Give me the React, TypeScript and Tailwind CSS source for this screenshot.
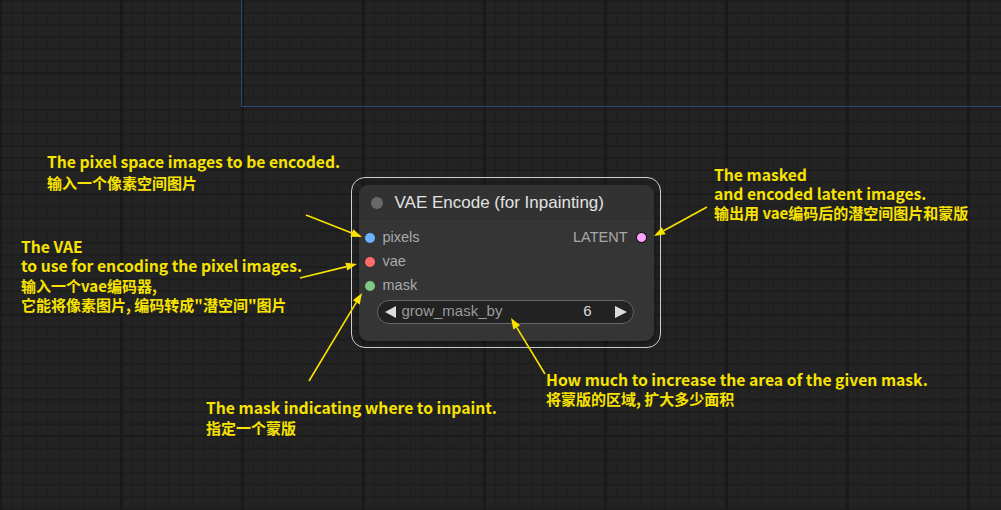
import React from "react";

const YELLOW = "#f8e300";

type Arrow = { x1: number; y1: number; x2: number; y2: number };

const arrows: Arrow[] = [
  { x1: 306, y1: 215, x2: 362, y2: 237 },
  { x1: 300, y1: 278, x2: 357, y2: 264 },
  { x1: 309, y1: 381, x2: 362, y2: 293 },
  { x1: 707, y1: 207, x2: 654, y2: 236 },
  { x1: 545, y1: 374, x2: 511, y2: 318 },
];

const ArrowLayer = () => (
  <svg className="absolute inset-0 pointer-events-none" width={1001} height={510}>
    {arrows.map((a, i) => {
      const dx = a.x2 - a.x1;
      const dy = a.y2 - a.y1;
      const len = Math.hypot(dx, dy);
      const ux = dx / len;
      const uy = dy / len;
      const bx = a.x2 - ux * 11;
      const by = a.y2 - uy * 11;
      const px = -uy * 4;
      const py = ux * 4;
      return (
        <g key={i}>
          <line x1={a.x1} y1={a.y1} x2={bx} y2={by} stroke={YELLOW} strokeWidth={1.6} />
          <polygon
            points={`${a.x2},${a.y2} ${bx + px},${by + py} ${bx - px},${by - py}`}
            fill={YELLOW}
          />
        </g>
      );
    })}
  </svg>
);

// lines: [text, isLatinOnly]
const Note = ({ className, lines }: { className: string; lines: [string, boolean][] }) => (
  <div
    className={`absolute whitespace-nowrap font-bold text-[15px] text-[#f8e300] font-['Noto_Sans_CJK_SC',sans-serif] ${className}`}
  >
    {lines.map(([l, latin], i) => (
      <div key={i} className={latin ? "text-[15.7px]" : ""}>
        {l}
      </div>
    ))}
  </div>
);

const Dot = ({ color, outlined }: { color: string; outlined?: boolean }) => (
  <span
    className={outlined ? "w-[11px] h-[11px] rounded-full border border-black" : "w-[10px] h-[10px] rounded-full"}
    style={{ backgroundColor: color }}
  />
);

const SlotRow = ({ color, label, output }: { color: string; label: string; output?: string }) => (
  <div className="flex items-center justify-between h-[24px] pl-[6px] pr-[7px] text-[14.5px] text-[#a9a9a9]">
    <div className="flex items-center gap-[8px]">
      <Dot color={color} />
      <span>{label}</span>
    </div>
    {output && (
      <div className="flex items-center gap-[8px]">
        <span>{output}</span>
        <Dot color="#ffa3ff" outlined />
      </div>
    )}
  </div>
);

const VaeEncodeNode = () => (
  <div className="absolute left-[351px] top-[177px] w-[310px] h-[171px] rounded-[14px] border-[1.5px] border-[#cfcfcf] p-[6.5px]">
    <div className="h-full rounded-[9px] bg-[#353535] shadow-[0_2px_6px_rgba(0,0,0,0.5)] overflow-hidden font-['Liberation_Sans',Arial,sans-serif]">
      <div className="flex items-center gap-[12px] h-[37px] bg-[#323232] border-b border-[#393939] pl-[12px]">
        <span className="w-[12px] h-[12px] rounded-full bg-[#696969]" />
        <span className="text-[17px] text-[#e2e2e2]">VAE Encode (for Inpainting)</span>
      </div>
      <div className="pt-[4px] flex flex-col">
        <SlotRow color="#6cb2ff" label="pixels" output="LATENT" />
        <SlotRow color="#ff6b6b" label="vae" />
        <SlotRow color="#80c685" label="mask" />
        <div className="mt-[2px] ml-[18px] mr-[20px] h-[24px] rounded-full bg-[#222222] border border-[#676767] flex items-center pl-[7px] pr-[6px] text-[15px]">
          <svg width="12" height="12" viewBox="0 0 12 12">
            <polygon points="0,6 11,0 11,12" fill="#dcdcdc" />
          </svg>
          <span className="ml-[5px] text-[#9a9a9a]">grow_mask_by</span>
          <span className="ml-auto text-[#dcdcdc]">6</span>
          <svg className="ml-[23px]" width="12" height="12" viewBox="0 0 12 12">
            <polygon points="12,6 0,0 0,12" fill="#dcdcdc" />
          </svg>
        </div>
      </div>
    </div>
  </div>
);

export default function App() {
  return (
    <div className="relative w-[1001px] h-[510px] overflow-hidden bg-[#232323] [background-image:linear-gradient(to_right,#1a1a1a_3px,transparent_3px),linear-gradient(to_bottom,#1b1b1b_2px,transparent_2px),linear-gradient(to_right,#1d1d1d_1px,transparent_1px),linear-gradient(to_bottom,#1d1d1d_1.5px,transparent_1.5px)] [background-size:121px_121px,121px_121px,12.1px_12.1px,12.1px_12.1px] [background-position:120px_0,0_72px,11px_0,0_12px]">
      <div className="absolute left-[241px] top-[-2px] w-[770px] h-[109px] border-l border-b border-[#2b4677]" />

      <Note
        className="left-[47px] top-[151px] leading-[21px]"
        lines={[
          ["The pixel space images to be encoded.", true],
          ["输入一个像素空间图片", false],
        ]}
      />
      <Note
        className="left-[21px] top-[237px] leading-[19.4px]"
        lines={[
          ["The VAE", true],
          ["to use for encoding the pixel images.", true],
          ["输入一个vae编码器,", false],
          ['它能将像素图片, 编码转成"潜空间"图片', false],
        ]}
      />
      <Note
        className="left-[714px] top-[165px] leading-[19px]"
        lines={[
          ["The masked", true],
          ["and encoded latent images.", true],
          ["输出用 vae编码后的潜空间图片和蒙版", false],
        ]}
      />
      <Note
        className="left-[546px] top-[370px] leading-[19px]"
        lines={[
          ["How much to increase the area of the given mask.", true],
          ["将蒙版的区域, 扩大多少面积", false],
        ]}
      />
      <Note
        className="left-[206px] top-[398px] leading-[20px]"
        lines={[
          ["The mask indicating where to inpaint.", true],
          ["指定一个蒙版", false],
        ]}
      />

      <VaeEncodeNode />
      <ArrowLayer />
    </div>
  );
}
